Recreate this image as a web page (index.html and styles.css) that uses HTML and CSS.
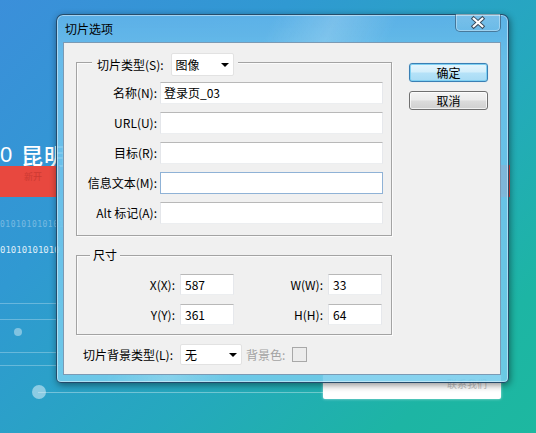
FILE: index.html
```html
<!DOCTYPE html>
<html lang="zh-CN">
<head>
<meta charset="utf-8">
<title>切片选项</title>
<link rel="stylesheet" href="styles.css">
</head>
<body>
<div class="desk">
  <div class="bg-num">0</div>
  <div class="bg-city">昆明</div>
  <div class="bg-red bg-red-l"><span>新开</span></div>
  <div class="bg-red bg-red-r"></div>
  <div class="bg-bin bin1">01010101010101</div>
  <div class="bg-bin bin2">01010101010</div>
  <div class="bg-line ln1"></div>
  <div class="bg-line ln2"></div>
  <div class="bg-dot dot1"></div>
  <div class="bg-line ln3"></div>
  <div class="bg-line ln4"></div>
  <div class="bg-line ln5"></div>
  <div class="bg-dot dot2"></div>
  <div class="bg-box"><span>联系我们</span></div>

  <div class="window">
    <div class="titlebar">
      <span class="title">切片选项</span>
      <div class="close">
        <svg width="46" height="18" viewBox="0 0 46 18">
          <path d="M18.5 5.5 L27.5 13.5 M27.5 5.5 L18.5 13.5" stroke="#3b4b5c" stroke-width="4.2" stroke-linecap="square" fill="none"/>
          <path d="M18.5 5.5 L27.5 13.5 M27.5 5.5 L18.5 13.5" stroke="#ffffff" stroke-width="2.2" stroke-linecap="square" fill="none"/>
        </svg>
      </div>
    </div>
    <div class="client">
      <div class="main">
        <div class="group g1">
          <div class="legend legend1">
            <span>切片类型(S):</span>
            <div class="select sel-type">图像<i class="arrow"></i></div>
          </div>
          <div class="rows">
            <label>名称(N):</label><div class="input">登录页_03</div>
            <label>URL(U):</label><div class="input"></div>
            <label>目标(R):</label><div class="input"></div>
            <label>信息文本(M):</label><div class="input focus"></div>
            <label>Alt 标记(A):</label><div class="input"></div>
          </div>
        </div>
        <div class="group g2">
          <div class="legend legend2">尺寸</div>
          <div class="dims">
            <label>X(X):</label><div class="input">587</div>
            <label>W(W):</label><div class="input">33</div>
            <label>Y(Y):</label><div class="input">361</div>
            <label>H(H):</label><div class="input">64</div>
          </div>
        </div>
        <div class="bottom">
          <label class="bg-label">切片背景类型(L):</label>
          <div class="select sel-bg">无<i class="arrow"></i></div>
          <span class="disabled">背景色:</span>
          <span class="swatch"></span>
        </div>
      </div>
      <div class="side">
        <div class="btn default">确定</div>
        <div class="btn">取消</div>
      </div>
    </div>
  </div>
</div>
</body>
</html>
```

FILE: styles.css
```css
* { box-sizing: border-box; }
html, body { margin: 0; padding: 0; }
body {
  width: 536px;
  height: 433px;
  overflow: hidden;
  font-family: "Noto Sans CJK SC", "Noto Sans", sans-serif;
  font-size: 12px;
  color: #000;
}
.desk {
  position: relative;
  width: 536px;
  height: 433px;
  overflow: hidden;
  background: linear-gradient(135deg, #3b8fda 0%, #3099d2 30%, #25a8be 60%, #1db5a4 85%, #1db8a0 100%);
}

/* background page decorations */
.bg-num, .bg-city {
  position: absolute;
  color: #fff;
  font-size: 24px;
  line-height: 24px;
  font-weight: 500;
}
.bg-num { left: 0; top: 143px; font-size: 22px; font-family: "Liberation Sans", sans-serif; }
.bg-city { left: 21px; top: 142px; font-size: 22px; letter-spacing: 1px; }
.bg-red { position: absolute; background: #e8483f; }
.bg-red-l { left: 0; top: 166px; width: 60px; height: 31px; }
.bg-red-l span {
  display: block;
  margin: 6px 0 0 24px;
  font-size: 9px;
  line-height: 10px;
  color: #cd3a32;
}
.bg-red-r { left: 500px; top: 165px; width: 10px; height: 32px; }
.bg-bin {
  position: absolute;
  left: 0;
  font-family: "DejaVu Sans Mono", monospace;
  font-size: 8px;
  line-height: 10px;
  letter-spacing: 0.5px;
  white-space: nowrap;
}
.bin1 { top: 220px; color: rgba(255,255,255,0.35); }
.bin2 { top: 245px; color: rgba(255,255,255,0.85); font-size: 9px; letter-spacing: 0; }
.bg-line { position: absolute; height: 1px; background: rgba(255,255,255,0.28); left: 0; }
.ln1 { top: 303px; width: 60px; }
.ln2 { top: 319px; width: 60px; }
.ln3 { top: 352px; width: 60px; }
.ln4 { top: 365px; width: 60px; }
.ln5 { top: 392px; left: 38px; width: 290px; background: rgba(255,255,255,0.35); }
.bg-dot { position: absolute; border-radius: 50%; background: rgba(255,255,255,0.4); }
.dot1 { left: 14px; top: 328px; width: 8px; height: 8px; }
.dot2 { left: 32px; top: 385px; width: 14px; height: 14px; background: rgba(220,240,250,0.55); }
.bg-box {
  position: absolute;
  left: 323px;
  top: 374px;
  width: 178px;
  height: 25px;
  background: #fff;
  border-radius: 2px;
  box-shadow: 0 0 3px rgba(255,255,255,0.6);
}
.bg-box span {
  position: absolute;
  left: 124px;
  top: 4px;
  font-size: 10px;
  line-height: 12px;
  color: #c4c4c4;
}

/* dialog window */
.window {
  position: absolute;
  left: 56px;
  top: 14px;
  width: 453px;
  height: 369px;
  display: flex;
  flex-direction: column;
  padding: 0 7px 7px 6px;
  border: 1px solid rgba(25, 55, 85, 0.85);
  border-radius: 7px 7px 5px 5px;
  background:
    linear-gradient(115deg, rgba(255,255,255,0) 0%, rgba(255,255,255,0) 35%, rgba(255,255,255,0.18) 45%, rgba(255,255,255,0) 55%, rgba(255,255,255,0) 100%),
    linear-gradient(180deg, rgba(95,178,232,0.92) 0%, rgba(110,192,236,0.9) 12%, rgba(118,204,236,0.88) 100%);
  box-shadow: inset 0 0 0 1px rgba(255,255,255,0.45), 1px 2px 7px rgba(0,0,0,0.45);
}
.titlebar {
  height: 27px;
  flex: none;
  display: flex;
  justify-content: space-between;
  align-items: flex-start;
  padding-left: 2px;
}
.title {
  margin-top: 5px;
  line-height: 17px;
  color: #000;
}
.close {
  width: 46px;
  height: 18px;
  margin-top: -1px;
  border: 1px solid rgba(30, 60, 90, 0.55);
  border-top: none;
  border-radius: 0 0 5px 5px;
  background: linear-gradient(180deg, rgba(255,255,255,0.2), rgba(255,255,255,0.08));
  box-shadow: inset 0 0 0 1px rgba(255,255,255,0.35);
  display: flex;
  align-items: flex-start;
  justify-content: center;
}
.close svg { display: block; margin-top: -1px; }

.client {
  flex: 1;
  display: flex;
  background: #f0f0f0;
  border: 1px solid #7b9ab4;
}
.main {
  display: flex;
  flex-direction: column;
  padding: 19px 0 0 12px;
}
.group {
  width: 316px;
  border: 1px solid #a3a3a3;
  box-shadow: inset 1px 1px 0 #fbfbfb, 1px 1px 0 #fbfbfb;
}
.legend {
  width: fit-content;
  background: #f0f0f0;
  display: flex;
  align-items: center;
}
.legend1 {
  height: 23px;
  margin: -10px 0 0 15px;
  padding: 0 4px 0 5px;
  gap: 7px;
  line-height: 16px;
}
.legend2 {
  height: 14px;
  line-height: 14px;
  margin: -8px 0 0 13px;
  padding: 0 3px;
}
.select {
  position: relative;
  background: #fff;
  border: 1px solid #e2e2e2;
  border-radius: 2px;
  line-height: 19px;
  padding-left: 4px;
}
.sel-type { width: 63px; height: 23px; line-height: 21px; }
.sel-bg { width: 62px; height: 21px; }
.arrow {
  position: absolute;
  right: 4px;
  top: 50%;
  margin-top: -2px;
  width: 0;
  height: 0;
  border-left: 4px solid transparent;
  border-right: 4px solid transparent;
  border-top: 4px solid #000;
}
.rows {
  display: grid;
  grid-template-columns: 80px 223px;
  grid-auto-rows: 22px;
  column-gap: 3px;
  row-gap: 8px;
  margin-top: 6px;
  padding-bottom: 11px;
}
label {
  text-align: right;
  line-height: 22px;
  white-space: nowrap;
}
.input {
  background: #fff;
  border: 1px solid;
  border-color: #b8b8b8 #e6e8ec #eceef0 #e4e6ea;
  padding-left: 3px;
  line-height: 20px;
}
.input.focus { border-color: #8fb2d6; }
.g2 { margin-top: 19px; }
.dims {
  display: grid;
  grid-template-columns: 98px 54px 84px 54px;
  grid-auto-rows: 21px;
  column-gap: 5px;
  row-gap: 9px;
  margin-top: 12px;
  padding-bottom: 9px;
}
.dims label { line-height: 21px; }
.dims .input { line-height: 19px; padding-left: 4px; }
.bottom {
  display: flex;
  align-items: center;
  margin-top: 9px;
  padding-left: 7px;
  height: 21px;
}
.bg-label { width: 97px; text-align: left; }
.disabled { color: #a3a3a3; margin-left: 4px; line-height: 21px; }
.swatch {
  width: 15px;
  height: 15px;
  margin-left: 7px;
  border: 1px solid #a8a8a8;
  background: #ececec;
}
.side {
  display: flex;
  flex-direction: column;
  gap: 9px;
  padding: 20px 0 0 17px;
}
.btn {
  width: 79px;
  height: 19px;
  border: 1px solid #707070;
  border-radius: 3px;
  text-align: center;
  line-height: 17px;
  background: linear-gradient(180deg, #f4f4f4 0%, #ebebeb 48%, #dcdcdc 52%, #d0d0d0 100%);
  box-shadow: inset 0 0 0 1px rgba(255,255,255,0.7);
}
.btn.default {
  border-color: #3a7fb4;
  background: linear-gradient(180deg, #e6f6fd 0%, #d2eefb 48%, #b5e2f8 52%, #a7dbf4 100%);
  box-shadow: inset 0 0 0 1px #7fd0f2, 0 0 1px #9fd6f0;
}
```
